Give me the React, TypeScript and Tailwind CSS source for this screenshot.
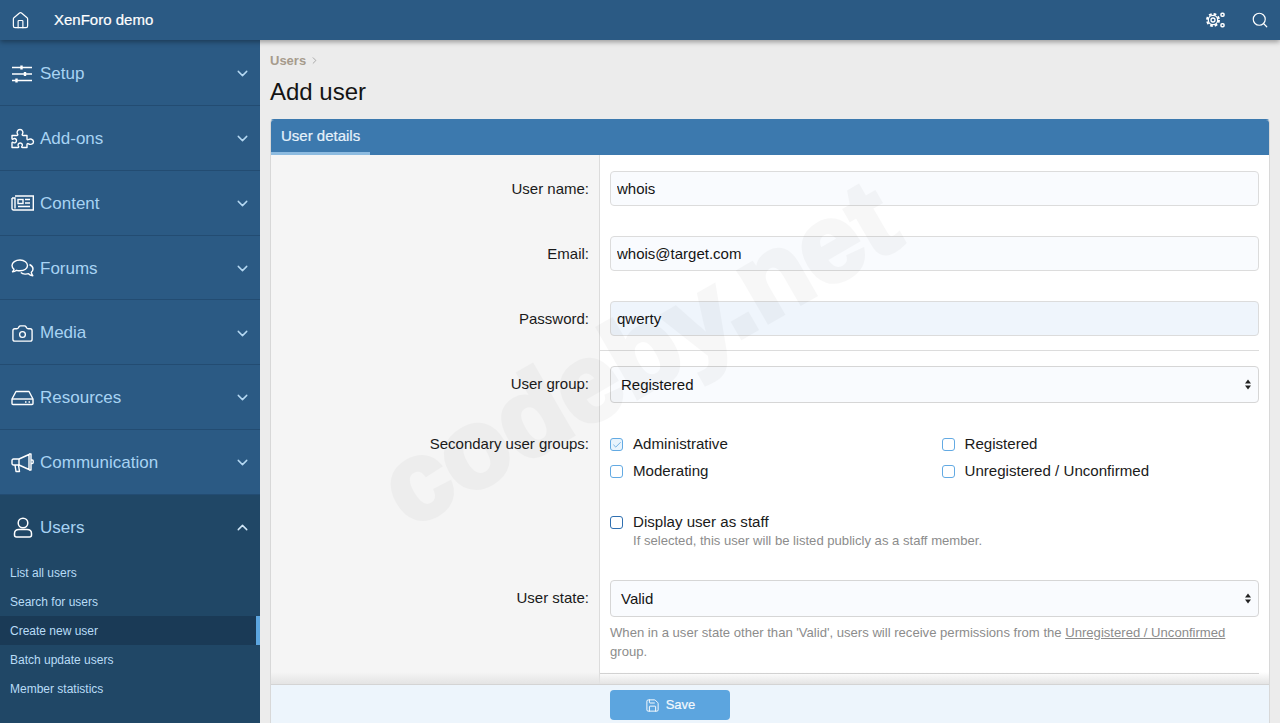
import React from "react";
import { ChevronDown, ChevronRight, ChevronUp, Home, Camera, Search, Save, Check } from "lucide-react";

const Sliders = () => (
  <svg width="22" height="18" viewBox="0 0 22 18" fill="none" stroke="white" strokeWidth="1.4">
    <path d="M1 2.500h20M1 9h20M1 15.500h20" />
    <path d="M10.500 0.500v4M14 7v4M5.500 13.500v4" strokeWidth="2.400" />
  </svg>
);
const PuzzleIcon = () => (
  <svg width="24" height="21" viewBox="0 0 24 21" fill="none" stroke="white" strokeWidth="1.4" strokeLinejoin="round">
    <path d="M1 7.500h5c1 0 1-.9.500-1.600C5.600 4.600 6.200 1.500 9 1.500s3.400 3.100 2.500 4.400c-.5.700-.5 1.600.500 1.600h4v3.500c0 1 .9 1 1.600.5 1.300-.9 4.900-.6 4.900 2.200s-3.600 3.100-4.900 2.200c-.7-.5-1.600-.5-1.600.5v3.100h-4.500c-1 0-1-.8-.5-1.400.8-1.100.2-3.100-1.800-3.100s-2.600 2-1.800 3.100c.5.600.5 1.400-.5 1.400H1V15c0-1 .8-1 1.400-.5 1.100.8 3.100.2 3.100-1.800s-2-2.600-3.100-1.800C1.800 11.400 1 11.400 1 10.400Z" />
  </svg>
);
const NewsIcon = () => (
  <svg width="23" height="16" viewBox="0 0 23 16" fill="none" stroke="white" strokeWidth="1.4">
    <path d="M4 1h18.300v14H2.500A1.500 1.500 0 0 1 1 13.500V3" />
    <path d="M1 3h3v10.500" />
    <rect x="7" y="4.500" width="5" height="4" />
    <path d="M14 4.500h5M14 8h5M7 11.500h12" />
  </svg>
);
const Comments = () => (
  <svg width="23" height="19" viewBox="0 0 23 19" fill="none" stroke="white" strokeWidth="1.4" strokeLinejoin="round">
    <path d="M9 1C4.500 1 1 3.400 1 6.600c0 1.500.8 2.800 2 3.800-.3 1-.9 1.800-1.500 2.400 1.500-.1 3-.7 4-1.500 1 .3 2.300.5 3.500.5 4.500 0 7.500-2.300 7.500-5.200S13.500 1 9 1Z" />
    <path d="M18.500 5.500c2.200 1 3.500 2.600 3.500 4.500 0 1.300-.6 2.400-1.700 3.300.2 1.300.8 2.500 1.500 3.400-1.700-.2-3.400-1-4.300-2-1.200.4-2.400.5-3.500.4-1.700 0-3.200-.6-4.200-1.600" />
  </svg>
);
const Hdd = () => (
  <svg width="23" height="16" viewBox="0 0 23 16" fill="none" stroke="white" strokeWidth="1.4" strokeLinejoin="round">
    <path d="M1 9 5 1.500h13L22 9v4.500a1 1 0 0 1-1 1H2a1 1 0 0 1-1-1Z" />
    <path d="M1 9h21" />
    <path d="M14 12h1.500M17.500 12H19" strokeWidth="1.600" />
  </svg>
);
const Horn = () => (
  <svg width="23" height="20" viewBox="0 0 23 20" fill="none" stroke="white" strokeWidth="1.4" strokeLinejoin="round">
    <path d="M1 7.500a1.500 1.500 0 0 1 1.500-1.500H8l10-4.500v15L8 12H2.500A1.500 1.500 0 0 1 1 10.500Z" />
    <path d="M18 1h2v16h-2M20 7h1.200a1 1 0 0 1 1 1v1.500a1 1 0 0 1-1 1H20" />
    <path d="M8 6v6M4 12l1 6.500h3.500L7.500 12" />
  </svg>
);
const UserIcon = () => (
  <svg width="20" height="21" viewBox="0 0 20 21" fill="none" stroke="white" strokeWidth="1.500">
    <circle cx="10" cy="6" r="4.800" />
    <path d="M6 12.500h8c2.800 0 4.500 1.700 4.500 4v1.500a2 2 0 0 1-2 2h-13a2 2 0 0 1-2-2v-1.500c0-2.300 1.700-4 4.500-4Z" />
  </svg>
);
const Cogs = () => (
  <svg width="19" height="16" viewBox="0 0 19 16" fill="none" stroke="white">
    <circle cx="7" cy="8" r="2" strokeWidth="1.300" />
    <circle cx="7" cy="8" r="4.700" strokeWidth="1.300" />
    <circle cx="7" cy="8" r="6" strokeWidth="2" strokeDasharray="2.700 2" />
    <rect x="15" y="1.200" width="3" height="3" rx="1" strokeWidth="1.500" />
    <rect x="15" y="11.800" width="3" height="3" rx="1" strokeWidth="1.500" />
  </svg>
);

const nav = [
  { label: "Setup", icon: <Sliders /> },
  { label: "Add-ons", icon: <PuzzleIcon /> },
  { label: "Content", icon: <NewsIcon /> },
  { label: "Forums", icon: <Comments /> },
  { label: "Media", icon: <Camera size={23} color="white" strokeWidth={1.400} /> },
  { label: "Resources", icon: <Hdd /> },
  { label: "Communication", icon: <Horn /> },
];
const sub = ["List all users", "Search for users", "Create new user", "Batch update users", "Member statistics"];

const Row = ({ label, labelClass, className, children }: { label?: string; labelClass: string; className: string; children: React.ReactNode }) => (
  <div className="flex">
    <div className={`w-[329px] shrink-0 bg-[#f5f5f5] border-r border-[#dcdcdc] pr-[10px] text-right text-[15px] leading-[20px] text-[#1a1a1a] ${labelClass}`}>{label}</div>
    <div className={`flex-1 pl-[10px] pr-[10px] ${className}`}>{children}</div>
  </div>
);

const Field = ({ value, bg = "bg-[#f9fbfe]" }: { value: string; bg?: string }) => (
  <input
    readOnly
    value={value}
    className={`block w-full h-[35px] rounded-[4px] border border-[#dcdcdc] ${bg} px-[6px] text-[15px] text-[#141414] outline-none`}
  />
);

const Select = ({ value }: { value: string }) => (
  <div className="flex h-[37px] items-center justify-between rounded-[4px] border border-[#d6d6d6] bg-[#f9fbfe] pl-[10px] pr-[6px] text-[15px] text-[#141414]">
    <span className="mt-[2px]">{value}</span>
    <svg width="8" height="11" viewBox="0 0 8 11" fill="#222">
      <path d="M4 0.500 7 4.500H1ZM4 10.500 1 6.500h6Z" />
    </svg>
  </div>
);

const Box = ({ checked, dark }: { checked?: boolean; dark?: boolean }) => (
  <span className={`flex h-[13px] w-[13px] shrink-0 items-center justify-center rounded-[3px] border-[1.500px] ${dark ? "border-[#2f6fb0] bg-white" : checked ? "border-[#63aae3] bg-[#e8f3fc]" : "border-[#63aae3] bg-white"}`}>
    {checked && <Check size={10} color="#5ca5df" strokeWidth={2} />}
  </span>
);

const CheckItem = ({ label, checked, dark }: { label: string; checked?: boolean; dark?: boolean }) => (
  <div className="flex h-[27px] items-center gap-[10px] text-[15.100px] text-[#1a1a1a]">
    <Box checked={checked} dark={dark} />
    <span>{label}</span>
  </div>
);

export default function App() {
  return (
    <div className="relative flex h-[723px] w-[1280px] flex-col overflow-hidden bg-[#ececec] font-['Liberation_Sans',Arial,sans-serif]">
      <header className="relative z-20 flex h-[40px] shrink-0 items-center bg-[#2b5a84] pl-[11px] pr-[12px] text-white shadow-[0_2px_5px_rgba(0,0,0,0.35)]">
        <Home size={19} color="white" strokeWidth={1.500} />
        <span className="ml-[24px] text-[15px] font-normal text-white [-webkit-text-stroke:0.2px_white]">XenForo demo</span>
        <div className="ml-auto flex items-center gap-[26px]">
          <Cogs />
          <Search size={18} color="white" strokeWidth={1.600} className="mr-[-1px]" />
        </div>
      </header>

      <div className="flex min-h-0 flex-1">
        <aside className="flex w-[260px] shrink-0 flex-col overflow-hidden bg-[#2b5a84] pt-[1px]">
          {nav.map((n) => (
            <div key={n.label} className="flex h-[64.860px] shrink-0 items-center border-b border-[#234c72] pl-[11px] pr-[9px] pt-[1.500px] text-[17px] text-[#a8d3f3]">
              <span className="flex w-[29px] justify-start">{n.icon}</span>
              <span>{n.label}</span>
              <ChevronDown size={17} color="#b5d8f2" strokeWidth={2} className="ml-auto" />
            </div>
          ))}
          <div className="flex-1 bg-[#204766]">
            <div className="flex h-[65px] items-center pl-[13px] pr-[9px] text-[17px] text-[#a8d3f3]">
              <span className="flex w-[27px] justify-start"><UserIcon /></span>
              <span>Users</span>
              <ChevronUp size={17} color="#d0e6f7" strokeWidth={2} className="ml-auto" />
            </div>
            <div className="mt-[-2px]">
              {sub.map((s) => (
                <div
                  key={s}
                  className={`flex h-[29px] items-center pl-[10px] text-[12px] text-[#b9dcf6] ${s === "Create new user" ? "border-r-[4px] border-[#5ca5df] bg-[#1a3a56]" : ""}`}
                >
                  {s}
                </div>
              ))}
            </div>
          </div>
        </aside>

        <main className="flex min-w-0 flex-1 flex-col px-[10px]">
          <div className="mt-[14px] flex h-[13px] items-center gap-[3px] text-[13px] font-bold leading-none text-[#a69b8c]">
            <span>Users</span>
            <ChevronRight size={11} color="#8c8c8c" strokeWidth={1.500} />
          </div>
          <h1 className="mt-[11px] text-[24px] font-normal leading-[28px] text-[#141414]">Add user</h1>
          <section className="mt-[13px] flex min-h-0 flex-1 flex-col overflow-hidden rounded-t-[4px] border-x border-t border-x-[#d8d8d8] border-t-[#3c79ae] bg-white">
            <div className="flex h-[35px] shrink-0 bg-[#3c79ae]">
              <div className="flex h-full items-center border-b-[3px] border-[#8dbbe0] px-[10px] text-[15px] text-[#e6f2fb] [-webkit-text-stroke:0.2px_#e6f2fb]">User details</div>
            </div>
            <div className="relative flex min-h-0 flex-1 flex-col overflow-hidden">
              <Row label="User name:" labelClass="pt-[24px]" className="pt-[16px] pb-[14px]"><Field value="whois" /></Row>
              <Row label="Email:" labelClass="pt-[24px]" className="pt-[16px] pb-[14px]"><Field value="whois@target.com" /></Row>
              <Row label="Password:" labelClass="pt-[24px]" className="pt-[16px] pb-[14px]"><Field value="qwerty" bg="bg-[#eff5fc]" /></Row>
              <div className="flex">
                <div className="w-[329px] shrink-0 border-r border-[#dcdcdc] bg-[#f5f5f5]" />
                <div className="mr-[10px] h-px flex-1 bg-[#dcdcdc]" />
              </div>
              <Row label="User group:" labelClass="pt-[23px]" className="pt-[15px] pb-[14px]"><Select value="Registered" /></Row>
              <Row label="Secondary user groups:" labelClass="pt-[17px]" className="pt-[14px] pb-[14px]">
                <div className="grid grid-cols-2 gap-x-[14px]">
                  <CheckItem label="Administrative" checked />
                  <CheckItem label="Registered" />
                  <CheckItem label="Moderating" />
                  <CheckItem label="Unregistered / Unconfirmed" />
                </div>
              </Row>
              <Row labelClass="" className="pt-[10px] pb-[9px]">
                <CheckItem label="Display user as staff" dark />
                <div className="ml-[23px] mt-[-4px] text-[13.100px] leading-[18px] text-[#8c8c8c]">If selected, this user will be listed publicly as a staff member.</div>
              </Row>
              <Row label="User state:" labelClass="pt-[29px]" className="pt-[21px] pb-[12px]">
                <Select value="Valid" />
                <div className="mt-[6px] text-[13.100px] leading-[19px] text-[#8c8c8c]">
                  When in a user state other than 'Valid', users will receive permissions from the <span className="underline">Unregistered / Unconfirmed</span> group.
                </div>
              </Row>
              <div className="flex flex-1">
                <div className="w-[329px] shrink-0 border-r border-[#dcdcdc] bg-[#f5f5f5]" />
                <div className="mr-[10px] h-px flex-1 bg-[#cfcfcf]" />
              </div>
              <div className="pointer-events-none absolute bottom-0 left-0 right-0 h-[12px] bg-gradient-to-b from-transparent to-[#e4e4e4]" />
            </div>
            <div className="flex h-[39px] shrink-0 border-t border-[#d4d4d4] bg-[#edf5fc] pl-[339px] pt-[5px]">
              <div className="flex h-[30px] w-[120px] items-center justify-center gap-[6px] rounded-[4px] bg-[#5ca5df] text-[13px] text-[#f2f8fd] [-webkit-text-stroke:0.2px_#f2f8fd]">
                <Save size={15} color="white" strokeWidth={1.500} />
                <span>Save</span>
              </div>
            </div>
          </section>
        </main>
      </div>

      <div className="pointer-events-none absolute left-[352px] top-[298px] z-10 origin-center rotate-[-30deg] whitespace-nowrap text-[110px] font-bold leading-none text-black opacity-[0.028] [-webkit-text-stroke:5px_black]">
        codeby.net
      </div>
    </div>
  );
}
